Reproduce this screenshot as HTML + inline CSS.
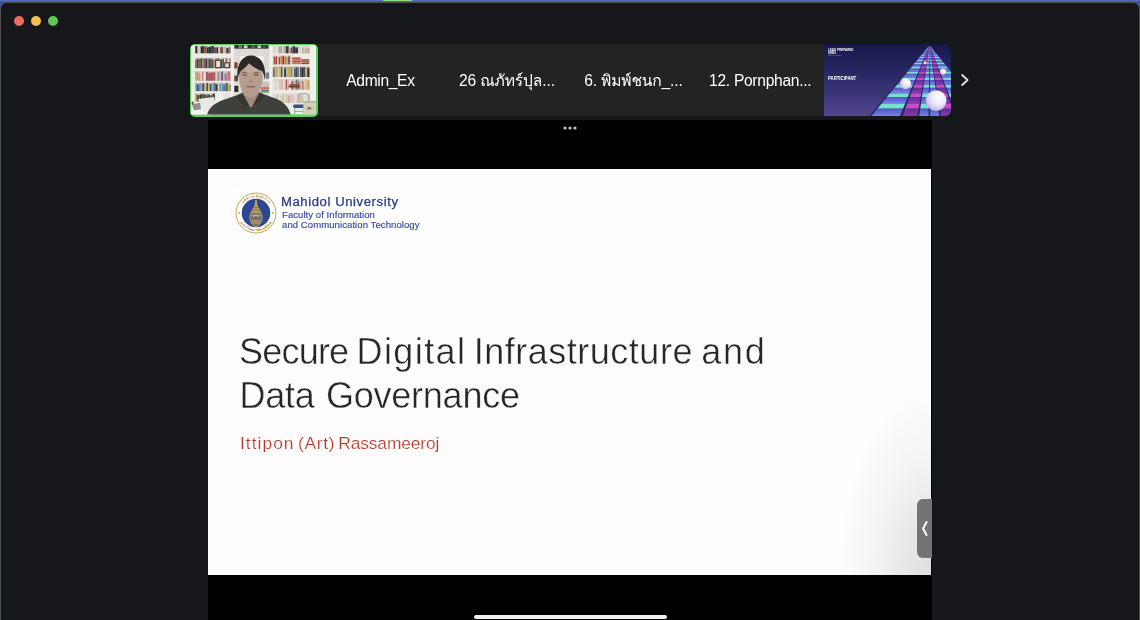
<!DOCTYPE html>
<html lang="en">
<head>
<meta charset="utf-8">
<title>Zoom Meeting</title>
<style>
*{box-sizing:border-box;margin:0;padding:0}
html,body{width:1140px;height:620px;overflow:hidden;background:#3a57b8;font-family:"Liberation Sans",sans-serif}
#desk{position:absolute;left:0;top:0;width:1140px;height:3px;background:linear-gradient(#5c72cc 0,#4a5db4 45%,#2f3f88 100%)}
#mic{position:absolute;left:383px;top:0;width:29px;height:1px;background:#8fe088}
#win{position:absolute;left:0;top:2px;width:1140px;height:620px;background:#16171b;border:1px solid #524f4a;border-radius:7px 7px 0 0;overflow:hidden}
.tl{position:absolute;top:16px;width:10px;height:10px;border-radius:50%}
#strip{position:absolute;left:318px;top:44px;width:506px;height:72px;background:#232323}
.w{position:absolute;white-space:nowrap;line-height:1}
.gl{position:absolute;left:0;top:0;width:100%;height:100%;will-change:transform}
.nm{top:72.6px;color:#fff;font-size:15.6px}
.th{font-family:"Liberation Sans","Loma","Garuda","Noto Sans Thai","Sarabun","IBM Plex Sans Thai",sans-serif}
#stage{position:absolute;left:208px;top:120.3px;width:723.5px;height:500px;background:#000}
#slide{position:absolute;left:208px;top:168.5px;width:723px;height:406px;background:#fefcfd;overflow:hidden}
.t1,.t2{font-size:36px;color:#262527;-webkit-text-stroke:0.45px #fefcfd}
.t1{top:165px}.t2{top:209px}
.sb{top:266px;font-size:17.4px;color:#b23a27;-webkit-text-stroke:0.2px #fefcfd}

#vid{position:absolute;left:189.5px;top:43.5px;width:128.5px;height:73px;border-radius:5px;background:#5ecf5e;overflow:hidden}
#vid svg{position:absolute;left:1.8px;top:1.8px;width:124.9px;height:69.4px;border-radius:2.5px;filter:saturate(.72) blur(.35px)}
#pt{position:absolute;left:824px;top:44px;width:126.5px;height:72px;border-radius:0 6px 6px 0;overflow:hidden;background:linear-gradient(#17184a 0,#2a2a66 45%,#51458f 100%)}
#pt svg{position:absolute;left:0;top:0;width:126.5px;height:72px}
#pt .gl{will-change:transform}
#nx{position:absolute;left:958px;top:72px;width:14px;height:16px}
#dots{position:absolute;left:563px;top:126px;width:14px;height:4px}
#home{position:absolute;left:473.5px;top:615px;width:193.5px;height:4.2px;border-radius:2.1px;background:#f2f2f2}
#tab{position:absolute;left:916.7px;top:499px;width:15px;height:59px;border-radius:6px 0 0 6px;background:#747376}
#shade{position:absolute;left:0;top:0;width:100%;height:100%;background:radial-gradient(ellipse 92px 185px at 100% 100%,rgba(110,110,114,.21) 0,rgba(110,110,114,.15) 30%,rgba(110,110,114,.06) 65%,rgba(110,110,114,0) 100%)}
#band{position:absolute;left:26px;top:18px;width:686px;height:108px;background:#fffeff}
#logo{position:absolute;left:27.3px;top:23.800px;width:42px;height:42px}
.lg{color:#2c3f92;transform-origin:0 0}
.l1{font-size:12px;top:27px;transform:scaleX(1.09);color:#263a88;-webkit-text-stroke:0.25px #263a88}
.l2,.l3{font-size:9.2px;transform:scaleX(1.04);-webkit-text-stroke:0.15px #3448a0;color:#3448a0}
.l2{top:42.2px}.l3{top:52.3px}
</style>
</head>
<body>
<div id="desk"></div><div id="mic"></div>
<div id="win"></div>
<div class="tl" style="left:13.5px;background:#ec6a5e"></div>
<div class="tl" style="left:30.8px;background:#f4bf4f"></div>
<div class="tl" style="left:48.2px;background:#61c554"></div>
<div id="strip"></div>
<div id="vid"><!--VID--><svg viewBox="0 0 124 68" preserveAspectRatio="none"><rect x="0.0" y="0.0" width="124.0" height="68.0" fill="#ecebe6"/><rect x="42.4" y="3.8" width="35.6" height="50.0" fill="#dedbd2"/><rect x="49.0" y="11.0" width="23.0" height="9.0" fill="#f4f4ee"/><rect x="43.0" y="0.0" width="34.0" height="3.6" fill="#3a3230"/><rect x="47.0" y="0.3" width="3.6" height="2.8" fill="#8a7a6a"/><rect x="52.5" y="0.3" width="3.6" height="2.8" fill="#d8d2c4"/><rect x="60.0" y="0.3" width="3.6" height="2.8" fill="#6a5a58"/><rect x="66.0" y="0.3" width="3.6" height="2.8" fill="#cfc8b8"/><rect x="71.0" y="0.3" width="3.6" height="2.8" fill="#4a4a5a"/><rect x="4.0" y="0.2" width="35.5" height="7.9" fill="#d6d2c8"/><rect x="4.3" y="1.0" width="2.2" height="7.1" fill="#2a2a32"/><rect x="6.5" y="0.8" width="3.1" height="7.3" fill="#d8d0c0"/><rect x="9.6" y="1.2" width="3.2" height="6.9" fill="#3a3028"/><rect x="13.1" y="1.3" width="2.4" height="6.8" fill="#8a4a3a"/><rect x="15.8" y="2.3" width="1.7" height="5.8" fill="#22303a"/><rect x="17.5" y="1.8" width="2.6" height="6.3" fill="#22303a"/><rect x="20.1" y="0.9" width="2.6" height="7.2" fill="#30404a"/><rect x="22.7" y="2.3" width="2.6" height="5.8" fill="#8a4a3a"/><rect x="25.3" y="2.3" width="1.8" height="5.8" fill="#22303a"/><rect x="27.2" y="2.8" width="1.8" height="5.3" fill="#d8d0c0"/><rect x="29.0" y="2.1" width="2.7" height="6.0" fill="#8a4a3a"/><rect x="32.0" y="2.0" width="3.0" height="6.1" fill="#c0b8a8"/><rect x="35.1" y="3.0" width="2.1" height="5.1" fill="#22303a"/><rect x="37.3" y="2.2" width="2.0" height="5.9" fill="#8a6a3a"/><rect x="4.0" y="12.5" width="35.5" height="10.2" fill="#cfcabf"/><rect x="4.3" y="14.5" width="1.2" height="8.2" fill="#8a3a34"/><rect x="5.8" y="13.4" width="1.1" height="9.3" fill="#4a3a30"/><rect x="7.2" y="13.9" width="0.9" height="8.8" fill="#5a4a3a"/><rect x="8.3" y="13.4" width="1.3" height="9.3" fill="#4a3a30"/><rect x="9.9" y="13.0" width="1.0" height="9.7" fill="#3a4a6a"/><rect x="11.1" y="12.9" width="1.7" height="9.8" fill="#7a8a5a"/><rect x="13.1" y="13.5" width="1.2" height="9.2" fill="#a03030"/><rect x="14.3" y="13.4" width="1.9" height="9.3" fill="#30404a"/><rect x="16.3" y="13.2" width="1.4" height="9.5" fill="#7a8a5a"/><rect x="17.7" y="13.5" width="1.7" height="9.2" fill="#4a3a30"/><rect x="19.4" y="13.5" width="1.1" height="9.2" fill="#3a4a6a"/><rect x="20.5" y="14.3" width="1.8" height="8.4" fill="#3a4a6a"/><rect x="22.6" y="14.0" width="2.0" height="8.7" fill="#e08a4a"/><rect x="24.6" y="13.1" width="1.1" height="9.6" fill="#5a6a8a"/><rect x="25.6" y="14.2" width="0.9" height="8.5" fill="#c04a6a"/><rect x="26.7" y="13.0" width="1.2" height="9.7" fill="#5a4a3a"/><rect x="28.1" y="13.3" width="1.6" height="9.4" fill="#e0c060"/><rect x="29.6" y="14.3" width="1.4" height="8.4" fill="#5a4a3a"/><rect x="31.3" y="13.5" width="1.3" height="9.2" fill="#4a3a30"/><rect x="33.0" y="12.9" width="1.0" height="9.8" fill="#e8e0d0"/><rect x="34.2" y="13.4" width="1.1" height="9.3" fill="#c9673c"/><rect x="35.3" y="13.1" width="0.9" height="9.6" fill="#8a3a34"/><rect x="36.4" y="12.9" width="1.6" height="9.8" fill="#e8e0d0"/><rect x="38.3" y="13.2" width="1.0" height="9.5" fill="#a03030"/><rect x="24.0" y="14.5" width="6.0" height="8.2" fill="#3a3630"/><rect x="25.0" y="15.5" width="4.0" height="6.2" fill="#e8e4da"/><rect x="33.0" y="17.0" width="5.5" height="5.7" fill="#2e2c2a"/><rect x="33.9" y="17.9" width="3.7" height="3.9" fill="#d8d4ca"/><rect x="4.0" y="25.6" width="35.5" height="9.4" fill="#cfcabf"/><rect x="4.3" y="26.1" width="1.5" height="8.9" fill="#e0a040"/><rect x="6.1" y="26.5" width="1.5" height="8.5" fill="#e87aa0"/><rect x="7.6" y="27.3" width="1.9" height="7.7" fill="#e0a040"/><rect x="9.5" y="26.3" width="1.6" height="8.7" fill="#d8d8d0"/><rect x="11.2" y="26.9" width="1.1" height="8.1" fill="#c85a3c"/><rect x="12.5" y="27.5" width="2.2" height="7.5" fill="#e8e4d8"/><rect x="14.8" y="26.6" width="2.1" height="8.4" fill="#c84a5a"/><rect x="17.0" y="27.1" width="1.7" height="7.9" fill="#c84a5a"/><rect x="18.8" y="27.3" width="2.0" height="7.7" fill="#c84a5a"/><rect x="20.7" y="26.6" width="1.6" height="8.4" fill="#c85a3c"/><rect x="22.3" y="26.8" width="1.9" height="8.2" fill="#c84a5a"/><rect x="24.4" y="27.7" width="1.5" height="7.3" fill="#b8d8d8"/><rect x="26.0" y="26.1" width="1.0" height="8.9" fill="#e0a040"/><rect x="27.0" y="26.8" width="1.3" height="8.2" fill="#e06a6a"/><rect x="28.3" y="27.1" width="1.5" height="7.9" fill="#a8c8d0"/><rect x="29.9" y="26.1" width="2.0" height="8.9" fill="#7a5a9a"/><rect x="31.9" y="26.2" width="1.5" height="8.8" fill="#a8c8d0"/><rect x="33.5" y="27.7" width="1.0" height="7.3" fill="#7a5a9a"/><rect x="34.8" y="27.7" width="1.4" height="7.3" fill="#e87aa0"/><rect x="36.3" y="26.0" width="2.2" height="9.0" fill="#e06a6a"/><rect x="38.8" y="26.2" width="0.5" height="8.8" fill="#e06a6a"/><rect x="4.0" y="36.8" width="35.5" height="8.4" fill="#cfcabf"/><rect x="4.3" y="37.7" width="1.8" height="7.5" fill="#58a0c8"/><rect x="6.1" y="38.5" width="0.9" height="6.7" fill="#2a3a5a"/><rect x="7.0" y="38.6" width="1.5" height="6.6" fill="#4a7aa8"/><rect x="8.4" y="37.6" width="1.2" height="7.6" fill="#4a7aa8"/><rect x="9.8" y="37.8" width="1.2" height="7.4" fill="#d8b838"/><rect x="11.1" y="37.7" width="2.1" height="7.5" fill="#384a6a"/><rect x="13.4" y="38.6" width="2.0" height="6.6" fill="#d8b838"/><rect x="15.4" y="37.1" width="1.6" height="8.1" fill="#384a6a"/><rect x="17.0" y="38.4" width="1.7" height="6.8" fill="#d8b838"/><rect x="18.7" y="38.2" width="1.1" height="7.0" fill="#2a3a5a"/><rect x="19.8" y="38.0" width="1.3" height="7.2" fill="#58a0c8"/><rect x="21.4" y="37.3" width="1.9" height="7.9" fill="#58a0c8"/><rect x="23.3" y="37.6" width="1.2" height="7.6" fill="#2a3a5a"/><rect x="24.8" y="38.4" width="1.6" height="6.8" fill="#2a3a5a"/><rect x="26.8" y="38.8" width="1.3" height="6.4" fill="#e8d8a0"/><rect x="28.1" y="37.9" width="1.8" height="7.3" fill="#58a0c8"/><rect x="30.2" y="37.5" width="1.6" height="7.7" fill="#58a0c8"/><rect x="31.9" y="38.6" width="2.1" height="6.6" fill="#4a7aa8"/><rect x="34.3" y="37.3" width="1.1" height="7.9" fill="#384a6a"/><rect x="35.5" y="37.5" width="1.0" height="7.7" fill="#2a3a5a"/><rect x="36.5" y="38.4" width="1.8" height="6.8" fill="#d8b838"/><rect x="38.4" y="38.6" width="0.9" height="6.6" fill="#384a6a"/><rect x="4.0" y="47.3" width="20.0" height="8.0" fill="#cfcabf"/><rect x="4.3" y="47.8" width="1.9" height="7.5" fill="#b89a30"/><rect x="6.2" y="49.0" width="2.2" height="6.3" fill="#4a3a30"/><rect x="8.7" y="48.3" width="2.2" height="7.0" fill="#30404a"/><rect x="10.9" y="47.8" width="1.4" height="7.5" fill="#8a6a3a"/><rect x="12.3" y="48.4" width="1.4" height="6.9" fill="#2a2a32"/><rect x="14.0" y="48.7" width="1.4" height="6.6" fill="#6a5a2a"/><rect x="15.4" y="49.2" width="1.1" height="6.1" fill="#22303a"/><rect x="16.5" y="48.1" width="1.1" height="7.2" fill="#4a3a30"/><rect x="17.8" y="49.0" width="1.9" height="6.3" fill="#5a4a3a"/><rect x="20.0" y="49.2" width="1.2" height="6.1" fill="#3a4a6a"/><rect x="21.5" y="47.8" width="1.8" height="7.5" fill="#2a2a32"/><rect x="23.3" y="47.7" width="0.5" height="7.6" fill="#2a2a32"/><rect x="24.5" y="47.8" width="7.0" height="7.5" fill="#f2f0ea"/><rect x="32.0" y="47.8" width="7.0" height="7.5" fill="#e6e3dc"/><rect x="81.0" y="0.2" width="37.0" height="7.9" fill="#dcd8ce"/><rect x="81.3" y="0.7" width="3.2" height="7.4" fill="#e0d8c8"/><rect x="84.5" y="0.8" width="2.1" height="7.3" fill="#e8e4da"/><rect x="86.8" y="1.6" width="3.6" height="6.5" fill="#b8a890"/><rect x="90.4" y="2.4" width="1.7" height="5.7" fill="#d8d0c0"/><rect x="92.1" y="1.0" width="2.1" height="7.1" fill="#b8a890"/><rect x="94.3" y="1.1" width="2.7" height="7.0" fill="#3a3a4a"/><rect x="97.0" y="2.7" width="2.1" height="5.4" fill="#b8a890"/><rect x="99.1" y="2.5" width="1.6" height="5.6" fill="#8a3a3a"/><rect x="100.8" y="1.2" width="2.6" height="6.9" fill="#3a3a4a"/><rect x="103.4" y="2.3" width="2.9" height="5.8" fill="#3a3a4a"/><rect x="106.6" y="1.3" width="3.5" height="6.8" fill="#e0d8c8"/><rect x="110.2" y="2.7" width="2.3" height="5.4" fill="#c8b8a0"/><rect x="112.7" y="3.2" width="3.6" height="4.9" fill="#c8b8a0"/><rect x="116.3" y="2.5" width="1.5" height="5.6" fill="#b8a890"/><rect x="81.0" y="10.3" width="19.0" height="8.7" fill="#cfcabf"/><rect x="81.3" y="10.7" width="1.1" height="8.3" fill="#e8a050"/><rect x="82.5" y="11.6" width="1.6" height="7.4" fill="#c8402c"/><rect x="84.4" y="11.0" width="1.1" height="8.0" fill="#c8402c"/><rect x="85.6" y="11.1" width="1.3" height="7.9" fill="#d8c8b0"/><rect x="87.1" y="12.0" width="1.2" height="7.0" fill="#a83030"/><rect x="88.3" y="10.6" width="1.3" height="8.4" fill="#e8a050"/><rect x="89.6" y="11.4" width="1.4" height="7.6" fill="#e06a3c"/><rect x="91.0" y="10.6" width="1.5" height="8.4" fill="#a83030"/><rect x="92.4" y="11.5" width="1.1" height="7.5" fill="#e8a050"/><rect x="93.5" y="11.5" width="1.2" height="7.5" fill="#d85a34"/><rect x="94.7" y="11.7" width="1.6" height="7.3" fill="#e8a050"/><rect x="96.5" y="11.3" width="1.7" height="7.7" fill="#a83030"/><rect x="98.2" y="11.9" width="0.9" height="7.1" fill="#d8c8b0"/><rect x="100.5" y="12.2" width="8.5" height="1.5" fill="#d8482c"/><rect x="100.5" y="13.9" width="8.5" height="1.5" fill="#e05a34"/><rect x="100.5" y="15.6" width="8.5" height="1.5" fill="#c83c30"/><rect x="100.5" y="17.3" width="8.5" height="1.5" fill="#e8643c"/><rect x="109.5" y="13.9" width="8.0" height="1.5" fill="#c83a3a"/><rect x="109.5" y="15.6" width="8.0" height="1.5" fill="#d84a40"/><rect x="109.5" y="17.3" width="8.0" height="1.5" fill="#b83434"/><rect x="81.0" y="21.2" width="37.0" height="10.2" fill="#a8a498"/><rect x="81.3" y="22.9" width="1.7" height="8.5" fill="#4a6a8a"/><rect x="83.0" y="22.5" width="1.8" height="8.9" fill="#c8b040"/><rect x="84.8" y="21.6" width="1.0" height="9.8" fill="#c8b040"/><rect x="86.0" y="22.1" width="2.0" height="9.3" fill="#d0c8b8"/><rect x="87.9" y="22.6" width="1.6" height="8.8" fill="#c8b040"/><rect x="89.5" y="21.5" width="1.4" height="9.9" fill="#3a5a4a"/><rect x="90.9" y="21.6" width="1.6" height="9.8" fill="#d0c8b8"/><rect x="92.7" y="22.9" width="1.8" height="8.5" fill="#22303a"/><rect x="94.5" y="22.6" width="1.2" height="8.8" fill="#d0c8b8"/><rect x="96.0" y="21.6" width="1.8" height="9.8" fill="#c8b040"/><rect x="97.9" y="22.5" width="1.7" height="8.9" fill="#c8b040"/><rect x="99.7" y="21.8" width="1.0" height="9.6" fill="#6a8a6a"/><rect x="100.8" y="21.7" width="1.6" height="9.7" fill="#d0c8b8"/><rect x="102.4" y="23.2" width="1.4" height="8.2" fill="#3a5a4a"/><rect x="103.8" y="22.0" width="1.6" height="9.4" fill="#4a4a6a"/><rect x="105.6" y="22.3" width="1.4" height="9.1" fill="#3a5a4a"/><rect x="107.0" y="21.6" width="1.2" height="9.8" fill="#d0c8b8"/><rect x="108.3" y="21.6" width="1.2" height="9.8" fill="#4a4a6a"/><rect x="109.8" y="22.2" width="2.0" height="9.2" fill="#22303a"/><rect x="111.8" y="21.7" width="1.5" height="9.7" fill="#4a4a6a"/><rect x="113.5" y="21.7" width="1.9" height="9.7" fill="#c8b040"/><rect x="115.6" y="22.7" width="1.9" height="8.7" fill="#22303a"/><rect x="81.0" y="33.6" width="37.0" height="10.1" fill="#cfcabf"/><rect x="81.3" y="34.9" width="2.1" height="8.8" fill="#e8e2d2"/><rect x="83.4" y="34.9" width="0.9" height="8.8" fill="#e0d090"/><rect x="84.6" y="34.2" width="1.3" height="9.5" fill="#f0e8d8"/><rect x="86.2" y="35.7" width="1.3" height="8.0" fill="#e8e2d2"/><rect x="87.6" y="35.7" width="1.9" height="8.0" fill="#d8c8a8"/><rect x="89.5" y="35.8" width="1.8" height="7.9" fill="#e0b8b0"/><rect x="91.5" y="34.7" width="1.4" height="9.0" fill="#e8e8e0"/><rect x="92.9" y="34.8" width="1.4" height="8.9" fill="#e0b8b0"/><rect x="94.2" y="34.0" width="1.3" height="9.7" fill="#c84a5a"/><rect x="95.6" y="34.2" width="1.7" height="9.5" fill="#e0b8b0"/><rect x="97.7" y="34.3" width="1.6" height="9.4" fill="#f0e8d8"/><rect x="99.5" y="35.6" width="2.0" height="8.1" fill="#c84a5a"/><rect x="101.9" y="35.9" width="2.1" height="7.8" fill="#d0a8a0"/><rect x="104.0" y="34.0" width="1.8" height="9.7" fill="#3a8a7a"/><rect x="106.1" y="35.5" width="1.5" height="8.2" fill="#c84a5a"/><rect x="107.7" y="35.8" width="1.5" height="7.9" fill="#d0a8a0"/><rect x="109.3" y="34.8" width="1.1" height="8.9" fill="#e0b8b0"/><rect x="110.5" y="35.5" width="1.2" height="8.2" fill="#c84a5a"/><rect x="111.9" y="34.4" width="1.4" height="9.3" fill="#e0d090"/><rect x="113.7" y="35.3" width="1.1" height="8.4" fill="#d8c8a8"/><rect x="114.7" y="35.6" width="1.6" height="8.1" fill="#d0a8a0"/><rect x="116.3" y="34.6" width="1.5" height="9.1" fill="#d8a030"/><rect x="97.0" y="39.5" width="11.0" height="2.2" fill="#6a4a2a"/><rect x="98.0" y="38.3" width="9.0" height="1.4" fill="#c0462e"/><rect x="81.0" y="47.3" width="37.0" height="9.5" fill="#e0dcd0"/><rect x="81.3" y="48.6" width="1.4" height="8.2" fill="#c8d8d8"/><rect x="82.7" y="48.7" width="1.1" height="8.1" fill="#f0e8d8"/><rect x="83.8" y="49.1" width="1.3" height="7.7" fill="#c8d8d8"/><rect x="85.1" y="48.4" width="1.7" height="8.4" fill="#b8c8b0"/><rect x="86.8" y="48.2" width="1.3" height="8.6" fill="#e8e2d2"/><rect x="88.4" y="49.4" width="1.2" height="7.4" fill="#e8d0c0"/><rect x="89.6" y="49.3" width="1.0" height="7.5" fill="#b8c8b0"/><rect x="90.9" y="48.4" width="1.6" height="8.4" fill="#e0b8b0"/><rect x="92.5" y="48.4" width="1.0" height="8.4" fill="#f0d8a0"/><rect x="93.9" y="48.5" width="2.0" height="8.3" fill="#d8c8a8"/><rect x="96.1" y="49.4" width="1.9" height="7.4" fill="#d0a8a0"/><rect x="98.4" y="48.1" width="2.0" height="8.7" fill="#d8c8a8"/><rect x="100.3" y="48.6" width="1.1" height="8.2" fill="#e8c8d0"/><rect x="101.4" y="49.0" width="1.9" height="7.8" fill="#e8c8d0"/><rect x="103.6" y="49.1" width="1.0" height="7.7" fill="#e8e2d2"/><rect x="104.6" y="49.3" width="1.2" height="7.5" fill="#e8c8d0"/><rect x="105.9" y="48.8" width="2.0" height="8.0" fill="#d0a8a0"/><rect x="108.2" y="47.8" width="1.7" height="9.0" fill="#d8c8a8"/><rect x="110.0" y="48.7" width="1.5" height="8.1" fill="#b8c8b0"/><rect x="111.6" y="48.7" width="1.1" height="8.1" fill="#e8e2d2"/><rect x="112.9" y="48.1" width="2.0" height="8.7" fill="#f0e8d8"/><rect x="114.9" y="48.0" width="1.4" height="8.8" fill="#c8d8d8"/><rect x="116.3" y="48.9" width="1.5" height="7.9" fill="#e0b8b0"/><rect x="43.0" y="17.0" width="3.2" height="6.0" fill="#7a4a2a"/><rect x="43.2" y="26.0" width="3.4" height="1.2" fill="#e8e6e0"/><rect x="43.0" y="30.0" width="3.6" height="5.5" fill="#5a4a3a"/><rect x="43.4" y="38.0" width="3.2" height="1.0" fill="#e8e6e0"/><rect x="43.0" y="40.0" width="4.0" height="6.0" fill="#2a2a2a"/><rect x="73.0" y="24.0" width="4.6" height="1.1" fill="#ecebe6"/><rect x="74.0" y="27.0" width="3.6" height="6.0" fill="#6a7a9a"/><rect x="72.0" y="34.0" width="5.6" height="1.1" fill="#ecebe6"/><rect x="71.0" y="36.5" width="6.5" height="5.0" fill="#c8c0b0"/><rect x="69.5" y="41.5" width="8.0" height="1.4" fill="#d8402c"/><rect x="69.5" y="42.9" width="8.0" height="1.3" fill="#e8a030"/><rect x="69.5" y="44.2" width="8.0" height="1.3" fill="#3a7a9a"/><rect x="69.5" y="45.5" width="8.0" height="1.3" fill="#4a9a5a"/><rect x="69.5" y="46.8" width="8.0" height="1.2" fill="#e8e0d0"/><rect x="39.5" y="0.0" width="2.9" height="58.0" fill="#f1f0ec"/><rect x="78.0" y="0.0" width="3.0" height="58.0" fill="#f1f0ec"/><path d="M0 60 Q6 57 12 60 L22 68 L0 68Z" fill="#f4f4f2"/><path d="M7 53 L23 51 L25 63 L12 66Z" fill="#e9e8e6"/><path d="M1 58 L9 56.5 L10 63 L3 64Z" fill="#8a8e94"/><rect x="0.0" y="43.0" width="3.2" height="15.0" fill="#f1f0ec"/><rect x="0.6" y="55.5" width="2.0" height="3.0" fill="#a03a2a"/><rect x="101.5" y="58.2" width="11.5" height="3.6" fill="#2f4f8a" rx="1"/><path d="M103 61.5v6.5M111.5 61.5v6.5M103 65h8.5M106 49c4-2 8-2 11 0l1 9" fill="none" stroke="#7aa884" stroke-width="0.9"/><rect x="111.5" y="55.0" width="12.5" height="13.0" fill="#d8cfb4"/><rect x="111.5" y="55.0" width="12.5" height="1.6" fill="#b8ae90"/><rect x="114.5" y="60.0" width="6.0" height="4.0" fill="#c4ba9c"/><rect x="116.2" y="61.4" width="2.6" height="1.2" fill="#3a3a3a"/><rect x="118.0" y="0.0" width="6.0" height="55.0" fill="#f0efeb"/><path d="M16 68 C18 61 24 56.5 32 53.8 L47.5 48.5 L59.5 51 L71 47.8 L84 52.5 C92 55.5 97 61 99 68Z" fill="#3d4039"/><path d="M47.5 48.5 L51.5 46.5 L58 58 L53 60 L46 52Z" fill="#33362f"/><path d="M71 47.8 L67.5 46 L60.5 58.5 L65 58 L72.5 51.5Z" fill="#33362f"/><path d="M51.5 42 L67.5 42 L67.8 47 L60.2 61 L58.8 61 L51.2 47Z" fill="#ad8672"/><path d="M47.7 30 C47.5 40 51 48 55.5 50.6 Q59.5 52.2 63.5 50.6 C68 48 71.5 40 71.2 30 C71 22 67 15.5 59.5 15.5 C52 15.5 48 22 47.7 30Z" fill="#be9a84"/><ellipse cx="59.3" cy="23" rx="8.5" ry="4.5" fill="#c9a791"/><path d="M46.300 34 C44.600 21 49.500 10.400 59.600 10.400 C70.400 10.400 75 20.500 73.200 34.500 C72.800 30.500 72 27.500 70.400 25.300 C67 24.300 61.500 21.500 57.600 17.800 C55 21 52 23.800 49.600 25.300 C47.900 27.800 46.800 30.500 46.300 34Z" fill="#2d2825"/><path d="M50.6 27.4q2.6-1 5.2 0M62 27.4q2.8-1 5.6 0" stroke="#5a463c" stroke-width="0.9" fill="none" opacity=".8"/><path d="M51.3 29.3h3.8M62.4 29.3h4.2" stroke="#3a2e2a" stroke-width="1" fill="none" opacity=".85"/><path d="M57.4 35.4q1.9 1.2 3.8 0" stroke="#9a735f" stroke-width="1" fill="none"/><path d="M55 40.6q4.300 1.0 8.600 0" stroke="#96605a" stroke-width="1.2" fill="none"/></svg><!--/VID--></div>
<div id="pt"><!--PT--><svg viewBox="0 0 126.5 72" preserveAspectRatio="none"><defs><linearGradient id="gt" x1="0" y1="0" x2="0" y2="1"><stop offset="0" stop-color="#4c55c4"/><stop offset="1" stop-color="#7f86e6"/></linearGradient><linearGradient id="gm" x1="0" y1="0" x2="0" y2="1"><stop offset="0" stop-color="#5c2f98"/><stop offset="1" stop-color="#8a3cae"/></linearGradient><radialGradient id="sp" cx="0.62" cy="0.34" r="0.8"><stop offset="0" stop-color="#ffffff"/><stop offset="0.45" stop-color="#ece8fa"/><stop offset="0.8" stop-color="#c3b9ea"/><stop offset="1" stop-color="#9a8fd6"/></radialGradient></defs><path d="M105.5 1.1 L41.8 76.1 L166.0 76.1Z" fill="#2a2466"/><path d="M42.11 78.40 L73.25 78.40 L69.02 88.55 L33.79 88.55Z" fill="url(#gt)"/><path d="M46.70 72.81 L75.59 72.81 L73.25 78.40 L42.11 78.40Z" fill="#74e0d0"/><path d="M53.52 64.49 L79.06 64.49 L75.59 72.81 L46.70 72.81Z" fill="url(#gt)"/><path d="M57.28 59.90 L80.97 59.90 L79.06 64.49 L53.52 64.49Z" fill="#74e0d0"/><path d="M62.88 53.08 L83.82 53.08 L80.97 59.90 L57.28 59.90Z" fill="url(#gt)"/><path d="M65.96 49.32 L85.39 49.32 L83.82 53.08 L62.88 53.08Z" fill="#74e0d0"/><path d="M70.55 43.72 L87.72 43.72 L85.39 49.32 L65.96 49.32Z" fill="url(#gt)"/><path d="M73.08 40.64 L89.01 40.64 L87.72 43.72 L70.55 43.72Z" fill="#74e0d0"/><path d="M76.84 36.05 L90.92 36.05 L89.01 40.64 L73.08 40.64Z" fill="url(#gt)"/><path d="M78.92 33.52 L91.98 33.52 L90.92 36.05 L76.84 36.05Z" fill="#74e0d0"/><path d="M82.00 29.76 L93.55 29.76 L91.98 33.52 L78.92 33.52Z" fill="url(#gt)"/><path d="M83.70 27.68 L94.41 27.68 L93.55 29.76 L82.00 29.76Z" fill="#74e0d0"/><path d="M86.23 24.60 L95.70 24.60 L94.41 27.68 L83.70 27.68Z" fill="url(#gt)"/><path d="M87.62 22.90 L96.41 22.90 L95.70 24.60 L86.23 24.60Z" fill="#74e0d0"/><path d="M89.70 20.37 L97.46 20.37 L96.41 22.90 L87.62 22.90Z" fill="url(#gt)"/><path d="M90.84 18.98 L98.04 18.98 L97.46 20.37 L89.70 20.37Z" fill="#74e0d0"/><path d="M92.54 16.90 L98.91 16.90 L98.04 18.98 L90.84 18.98Z" fill="url(#gt)"/><path d="M93.48 15.76 L99.39 15.76 L98.91 16.90 L92.54 16.90Z" fill="#74e0d0"/><path d="M94.88 14.06 L100.10 14.06 L99.39 15.76 L93.48 15.76Z" fill="url(#gt)"/><path d="M95.64 13.12 L100.49 13.12 L100.10 14.06 L94.88 14.06Z" fill="#74e0d0"/><path d="M96.79 11.72 L101.07 11.72 L100.49 13.12 L95.64 13.12Z" fill="url(#gt)"/><path d="M97.42 10.96 L101.39 10.96 L101.07 11.72 L96.79 11.72Z" fill="#74e0d0"/><path d="M98.36 9.81 L101.87 9.81 L101.39 10.96 L97.42 10.96Z" fill="url(#gt)"/><path d="M98.87 9.18 L102.13 9.18 L101.87 9.81 L98.36 9.81Z" fill="#74e0d0"/><path d="M99.64 8.24 L102.52 8.24 L102.13 9.18 L98.87 9.18Z" fill="url(#gt)"/><path d="M100.07 7.73 L102.74 7.73 L102.52 8.24 L99.64 8.24Z" fill="#74e0d0"/><path d="M100.70 6.96 L103.06 6.96 L102.74 7.73 L100.07 7.73Z" fill="url(#gt)"/><path d="M101.04 6.53 L103.23 6.53 L103.06 6.96 L100.70 6.96Z" fill="#74e0d0"/><path d="M101.56 5.90 L103.50 5.90 L103.23 6.53 L101.04 6.53Z" fill="url(#gt)"/><path d="M101.85 5.56 L103.64 5.56 L103.50 5.90 L101.56 5.90Z" fill="#74e0d0"/><path d="M102.27 5.04 L103.86 5.04 L103.64 5.56 L101.85 5.56Z" fill="url(#gt)"/><path d="M102.50 4.75 L103.98 4.75 L103.86 5.04 L102.27 5.04Z" fill="#74e0d0"/><path d="M102.85 4.33 L104.15 4.33 L103.98 4.75 L102.50 4.75Z" fill="url(#gt)"/><path d="M103.04 4.10 L104.25 4.10 L104.15 4.33 L102.85 4.33Z" fill="#74e0d0"/><path d="M103.33 3.75 L104.40 3.75 L104.25 4.10 L103.04 4.10Z" fill="url(#gt)"/><path d="M103.49 3.56 L104.48 3.56 L104.40 3.75 L103.33 3.75Z" fill="#74e0d0"/><path d="M103.72 3.27 L104.59 3.27 L104.48 3.56 L103.49 3.56Z" fill="url(#gt)"/><path d="M103.85 3.11 L104.66 3.11 L104.59 3.27 L103.72 3.27Z" fill="#74e0d0"/><path d="M104.04 2.88 L104.76 2.88 L104.66 3.11 L103.85 3.11Z" fill="url(#gt)"/><path d="M104.15 2.75 L104.81 2.75 L104.76 2.88 L104.04 2.88Z" fill="#74e0d0"/><path d="M104.30 2.56 L104.89 2.56 L104.81 2.75 L104.15 2.75Z" fill="url(#gt)"/><path d="M104.39 2.45 L104.93 2.45 L104.89 2.56 L104.30 2.56Z" fill="#74e0d0"/><path d="M76.02 78.40 L92.25 78.40 L90.51 88.55 L72.14 88.55Z" fill="url(#gm)"/><path d="M78.15 72.81 L93.21 72.81 L92.25 78.40 L76.02 78.40Z" fill="#c44cc4"/><path d="M81.32 64.49 L94.63 64.49 L93.21 72.81 L78.15 72.81Z" fill="url(#gm)"/><path d="M83.07 59.90 L95.42 59.90 L94.63 64.49 L81.32 64.49Z" fill="#c44cc4"/><path d="M85.67 53.08 L96.59 53.08 L95.42 59.90 L83.07 59.90Z" fill="url(#gm)"/><path d="M87.11 49.32 L97.23 49.32 L96.59 53.08 L85.67 53.08Z" fill="#c44cc4"/><path d="M89.24 43.72 L98.19 43.72 L97.23 49.32 L87.11 49.32Z" fill="url(#gm)"/><path d="M90.42 40.64 L98.72 40.64 L98.19 43.72 L89.24 43.72Z" fill="#c44cc4"/><path d="M92.17 36.05 L99.51 36.05 L98.72 40.64 L90.42 40.64Z" fill="url(#gm)"/><path d="M93.13 33.52 L99.94 33.52 L99.51 36.05 L92.17 36.05Z" fill="#c44cc4"/><path d="M94.57 29.76 L100.59 29.76 L99.94 33.52 L93.13 33.52Z" fill="url(#gm)"/><path d="M95.36 27.68 L100.94 27.68 L100.59 29.76 L94.57 29.76Z" fill="#c44cc4"/><path d="M96.54 24.60 L101.47 24.60 L100.94 27.68 L95.36 27.68Z" fill="url(#gm)"/><path d="M97.19 22.90 L101.76 22.90 L101.47 24.60 L96.54 24.60Z" fill="#c44cc4"/><path d="M98.15 20.37 L102.20 20.37 L101.76 22.90 L97.19 22.90Z" fill="url(#gm)"/><path d="M98.68 18.98 L102.44 18.98 L102.20 20.37 L98.15 20.37Z" fill="#c44cc4"/><path d="M99.47 16.90 L102.79 16.90 L102.44 18.98 L98.68 18.98Z" fill="url(#gm)"/><path d="M99.91 15.76 L102.99 15.76 L102.79 16.90 L99.47 16.90Z" fill="#c44cc4"/><path d="M100.56 14.06 L103.28 14.06 L102.99 15.76 L99.91 15.76Z" fill="url(#gm)"/><path d="M100.92 13.12 L103.44 13.12 L103.28 14.06 L100.56 14.06Z" fill="#c44cc4"/><path d="M101.45 11.72 L103.68 11.72 L103.44 13.12 L100.92 13.12Z" fill="url(#gm)"/><path d="M101.74 10.96 L103.81 10.96 L103.68 11.72 L101.45 11.72Z" fill="#c44cc4"/><path d="M102.18 9.81 L104.01 9.81 L103.81 10.96 L101.74 10.96Z" fill="url(#gm)"/><path d="M102.42 9.18 L104.11 9.18 L104.01 9.81 L102.18 9.81Z" fill="#c44cc4"/><path d="M102.78 8.24 L104.28 8.24 L104.11 9.18 L102.42 9.18Z" fill="url(#gm)"/><path d="M102.97 7.73 L104.36 7.73 L104.28 8.24 L102.78 8.24Z" fill="#c44cc4"/><path d="M103.27 6.96 L104.50 6.96 L104.36 7.73 L102.97 7.73Z" fill="url(#gm)"/><path d="M103.43 6.53 L104.57 6.53 L104.50 6.96 L103.27 6.96Z" fill="#c44cc4"/><path d="M103.67 5.90 L104.68 5.90 L104.57 6.53 L103.43 6.53Z" fill="url(#gm)"/><path d="M103.80 5.56 L104.74 5.56 L104.68 5.90 L103.67 5.90Z" fill="#c44cc4"/><path d="M104.00 5.04 L104.82 5.04 L104.74 5.56 L103.80 5.56Z" fill="url(#gm)"/><path d="M104.11 4.75 L104.87 4.75 L104.82 5.04 L104.00 5.04Z" fill="#c44cc4"/><path d="M104.27 4.33 L104.95 4.33 L104.87 4.75 L104.11 4.75Z" fill="url(#gm)"/><path d="M104.36 4.10 L104.99 4.10 L104.95 4.33 L104.27 4.33Z" fill="#c44cc4"/><path d="M104.49 3.75 L105.05 3.75 L104.99 4.10 L104.36 4.10Z" fill="url(#gm)"/><path d="M104.56 3.56 L105.08 3.56 L105.05 3.75 L104.49 3.75Z" fill="#c44cc4"/><path d="M104.67 3.27 L105.13 3.27 L105.08 3.56 L104.56 3.56Z" fill="url(#gm)"/><path d="M104.73 3.11 L105.15 3.11 L105.13 3.27 L104.67 3.27Z" fill="#c44cc4"/><path d="M104.82 2.88 L105.19 2.88 L105.15 3.11 L104.73 3.11Z" fill="url(#gm)"/><path d="M104.87 2.75 L105.22 2.75 L105.19 2.88 L104.82 2.88Z" fill="#c44cc4"/><path d="M104.94 2.56 L105.25 2.56 L105.22 2.75 L104.87 2.75Z" fill="url(#gm)"/><path d="M104.98 2.45 L105.27 2.45 L105.25 2.56 L104.94 2.56Z" fill="#c44cc4"/><path d="M94.24 78.40 L104.51 78.40 L104.38 88.55 L92.76 88.55Z" fill="url(#gt)"/><path d="M95.05 72.81 L104.58 72.81 L104.51 78.40 L94.24 78.40Z" fill="#74e0d0"/><path d="M96.26 64.49 L104.69 64.49 L104.58 72.81 L95.05 72.81Z" fill="url(#gt)"/><path d="M96.93 59.90 L104.74 59.90 L104.69 64.49 L96.26 64.49Z" fill="#74e0d0"/><path d="M97.93 53.08 L104.83 53.08 L104.74 59.90 L96.93 59.90Z" fill="url(#gt)"/><path d="M98.47 49.32 L104.88 49.32 L104.83 53.08 L97.93 53.08Z" fill="#74e0d0"/><path d="M99.29 43.72 L104.95 43.72 L104.88 49.32 L98.47 49.32Z" fill="url(#gt)"/><path d="M99.74 40.64 L104.99 40.64 L104.95 43.72 L99.29 43.72Z" fill="#74e0d0"/><path d="M100.41 36.05 L105.05 36.05 L104.99 40.64 L99.74 40.64Z" fill="url(#gt)"/><path d="M100.78 33.52 L105.08 33.52 L105.05 36.05 L100.41 36.05Z" fill="#74e0d0"/><path d="M101.32 29.76 L105.13 29.76 L105.08 33.52 L100.78 33.52Z" fill="url(#gt)"/><path d="M101.63 27.68 L105.16 27.68 L105.13 29.76 L101.32 29.76Z" fill="#74e0d0"/><path d="M102.08 24.60 L105.20 24.60 L105.16 27.68 L101.63 27.68Z" fill="url(#gt)"/><path d="M102.32 22.90 L105.22 22.90 L105.20 24.60 L102.08 24.60Z" fill="#74e0d0"/><path d="M102.69 20.37 L105.25 20.37 L105.22 22.90 L102.32 22.90Z" fill="url(#gt)"/><path d="M102.90 18.98 L105.27 18.98 L105.25 20.37 L102.69 20.37Z" fill="#74e0d0"/><path d="M103.20 16.90 L105.30 16.90 L105.27 18.98 L102.90 18.98Z" fill="url(#gt)"/><path d="M103.36 15.76 L105.31 15.76 L105.30 16.90 L103.20 16.90Z" fill="#74e0d0"/><path d="M103.61 14.06 L105.33 14.06 L105.31 15.76 L103.36 15.76Z" fill="url(#gt)"/><path d="M103.75 13.12 L105.35 13.12 L105.33 14.06 L103.61 14.06Z" fill="#74e0d0"/><path d="M103.95 11.72 L105.36 11.72 L105.35 13.12 L103.75 13.12Z" fill="url(#gt)"/><path d="M104.06 10.96 L105.37 10.96 L105.36 11.72 L103.95 11.72Z" fill="#74e0d0"/><path d="M104.23 9.81 L105.39 9.81 L105.37 10.96 L104.06 10.96Z" fill="url(#gt)"/><path d="M104.32 9.18 L105.40 9.18 L105.39 9.81 L104.23 9.81Z" fill="#74e0d0"/><path d="M104.46 8.24 L105.41 8.24 L105.40 9.18 L104.32 9.18Z" fill="url(#gt)"/><path d="M104.53 7.73 L105.41 7.73 L105.41 8.24 L104.46 8.24Z" fill="#74e0d0"/><path d="M104.65 6.96 L105.42 6.96 L105.41 7.73 L104.53 7.73Z" fill="url(#gt)"/><path d="M104.71 6.53 L105.43 6.53 L105.42 6.96 L104.65 6.96Z" fill="#74e0d0"/><path d="M104.80 5.90 L105.44 5.90 L105.43 6.53 L104.71 6.53Z" fill="url(#gt)"/><path d="M104.85 5.56 L105.44 5.56 L105.44 5.90 L104.80 5.90Z" fill="#74e0d0"/><path d="M104.93 5.04 L105.45 5.04 L105.44 5.56 L104.85 5.56Z" fill="url(#gt)"/><path d="M104.97 4.75 L105.45 4.75 L105.45 5.04 L104.93 5.04Z" fill="#74e0d0"/><path d="M105.03 4.33 L105.46 4.33 L105.45 4.75 L104.97 4.75Z" fill="url(#gt)"/><path d="M105.06 4.10 L105.46 4.10 L105.46 4.33 L105.03 4.33Z" fill="#74e0d0"/><path d="M105.11 3.75 L105.47 3.75 L105.46 4.10 L105.06 4.10Z" fill="url(#gt)"/><path d="M105.14 3.56 L105.47 3.56 L105.47 3.75 L105.11 3.75Z" fill="#74e0d0"/><path d="M105.18 3.27 L105.47 3.27 L105.47 3.56 L105.14 3.56Z" fill="url(#gt)"/><path d="M105.21 3.11 L105.47 3.11 L105.47 3.27 L105.18 3.27Z" fill="#74e0d0"/><path d="M105.24 2.88 L105.48 2.88 L105.47 3.11 L105.21 3.11Z" fill="url(#gt)"/><path d="M105.26 2.75 L105.48 2.75 L105.48 2.88 L105.24 2.88Z" fill="#74e0d0"/><path d="M105.29 2.56 L105.48 2.56 L105.48 2.75 L105.26 2.75Z" fill="url(#gt)"/><path d="M105.30 2.45 L105.48 2.45 L105.48 2.56 L105.29 2.56Z" fill="#74e0d0"/><path d="M106.27 78.40 L116.43 78.40 L117.87 88.55 L106.37 88.55Z" fill="url(#gt)"/><path d="M106.22 72.81 L115.64 72.81 L116.43 78.40 L106.27 78.40Z" fill="#74e0d0"/><path d="M106.13 64.49 L114.46 64.49 L115.64 72.81 L106.22 72.81Z" fill="url(#gt)"/><path d="M106.09 59.90 L113.82 59.90 L114.46 64.49 L106.13 64.49Z" fill="#74e0d0"/><path d="M106.02 53.08 L112.85 53.08 L113.82 59.90 L106.09 59.90Z" fill="url(#gt)"/><path d="M105.98 49.32 L112.32 49.32 L112.85 53.08 L106.02 53.08Z" fill="#74e0d0"/><path d="M105.93 43.72 L111.53 43.72 L112.32 49.32 L105.98 49.32Z" fill="url(#gt)"/><path d="M105.90 40.64 L111.09 40.64 L111.53 43.72 L105.93 43.72Z" fill="#74e0d0"/><path d="M105.85 36.05 L110.44 36.05 L111.09 40.64 L105.90 40.64Z" fill="url(#gt)"/><path d="M105.82 33.52 L110.09 33.52 L110.44 36.05 L105.85 36.05Z" fill="#74e0d0"/><path d="M105.79 29.76 L109.55 29.76 L110.09 33.52 L105.82 33.52Z" fill="url(#gt)"/><path d="M105.77 27.68 L109.26 27.68 L109.55 29.76 L105.79 29.76Z" fill="#74e0d0"/><path d="M105.73 24.60 L108.82 24.60 L109.26 27.68 L105.77 27.68Z" fill="url(#gt)"/><path d="M105.72 22.90 L108.58 22.90 L108.82 24.60 L105.73 24.60Z" fill="#74e0d0"/><path d="M105.69 20.37 L108.23 20.37 L108.58 22.90 L105.72 22.90Z" fill="url(#gt)"/><path d="M105.68 18.98 L108.03 18.98 L108.23 20.37 L105.69 20.37Z" fill="#74e0d0"/><path d="M105.66 16.90 L107.73 16.90 L108.03 18.98 L105.68 18.98Z" fill="url(#gt)"/><path d="M105.65 15.76 L107.57 15.76 L107.73 16.90 L105.66 16.90Z" fill="#74e0d0"/><path d="M105.63 14.06 L107.33 14.06 L107.57 15.76 L105.65 15.76Z" fill="url(#gt)"/><path d="M105.62 13.12 L107.20 13.12 L107.33 14.06 L105.63 14.06Z" fill="#74e0d0"/><path d="M105.61 11.72 L107.00 11.72 L107.20 13.12 L105.62 13.12Z" fill="url(#gt)"/><path d="M105.60 10.96 L106.89 10.96 L107.00 11.72 L105.61 11.72Z" fill="#74e0d0"/><path d="M105.59 9.81 L106.73 9.81 L106.89 10.96 L105.60 10.96Z" fill="url(#gt)"/><path d="M105.58 9.18 L106.64 9.18 L106.73 9.81 L105.59 9.81Z" fill="#74e0d0"/><path d="M105.57 8.24 L106.51 8.24 L106.64 9.18 L105.58 9.18Z" fill="url(#gt)"/><path d="M105.57 7.73 L106.44 7.73 L106.51 8.24 L105.57 8.24Z" fill="#74e0d0"/><path d="M105.56 6.96 L106.33 6.96 L106.44 7.73 L105.57 7.73Z" fill="url(#gt)"/><path d="M105.55 6.53 L106.27 6.53 L106.33 6.96 L105.56 6.96Z" fill="#74e0d0"/><path d="M105.55 5.90 L106.18 5.90 L106.27 6.53 L105.55 6.53Z" fill="url(#gt)"/><path d="M105.54 5.56 L106.13 5.56 L106.18 5.90 L105.55 5.90Z" fill="#74e0d0"/><path d="M105.54 5.04 L106.06 5.04 L106.13 5.56 L105.54 5.56Z" fill="url(#gt)"/><path d="M105.54 4.75 L106.02 4.75 L106.06 5.04 L105.54 5.04Z" fill="#74e0d0"/><path d="M105.53 4.33 L105.96 4.33 L106.02 4.75 L105.54 4.75Z" fill="url(#gt)"/><path d="M105.53 4.10 L105.92 4.10 L105.96 4.33 L105.53 4.33Z" fill="#74e0d0"/><path d="M105.53 3.75 L105.87 3.75 L105.92 4.10 L105.53 4.10Z" fill="url(#gt)"/><path d="M105.52 3.56 L105.85 3.56 L105.87 3.75 L105.53 3.75Z" fill="#74e0d0"/><path d="M105.52 3.27 L105.81 3.27 L105.85 3.56 L105.52 3.56Z" fill="url(#gt)"/><path d="M105.52 3.11 L105.78 3.11 L105.81 3.27 L105.52 3.27Z" fill="#74e0d0"/><path d="M105.52 2.88 L105.75 2.88 L105.78 3.11 L105.52 3.11Z" fill="url(#gt)"/><path d="M105.52 2.75 L105.73 2.75 L105.75 2.88 L105.52 2.88Z" fill="#74e0d0"/><path d="M105.51 2.56 L105.71 2.56 L105.73 2.75 L105.52 2.75Z" fill="url(#gt)"/><path d="M105.51 2.45 L105.69 2.45 L105.71 2.56 L105.51 2.56Z" fill="#74e0d0"/><path d="M118.20 78.40 L133.66 78.40 L137.36 88.55 L119.87 88.55Z" fill="url(#gm)"/><path d="M117.28 72.81 L131.62 72.81 L133.66 78.40 L118.20 78.40Z" fill="#c44cc4"/><path d="M115.91 64.49 L128.59 64.49 L131.62 72.81 L117.28 72.81Z" fill="url(#gm)"/><path d="M115.16 59.90 L126.92 59.90 L128.59 64.49 L115.91 64.49Z" fill="#c44cc4"/><path d="M114.04 53.08 L124.43 53.08 L126.92 59.90 L115.16 59.90Z" fill="url(#gm)"/><path d="M113.42 49.32 L123.06 49.32 L124.43 53.08 L114.04 53.08Z" fill="#c44cc4"/><path d="M112.50 43.72 L121.03 43.72 L123.06 49.32 L113.42 49.32Z" fill="url(#gm)"/><path d="M112.00 40.64 L119.90 40.64 L121.03 43.72 L112.50 43.72Z" fill="#c44cc4"/><path d="M111.24 36.05 L118.23 36.05 L119.90 40.64 L112.00 40.64Z" fill="url(#gm)"/><path d="M110.83 33.52 L117.31 33.52 L118.23 36.05 L111.24 36.05Z" fill="#c44cc4"/><path d="M110.21 29.76 L115.94 29.76 L117.31 33.52 L110.83 33.52Z" fill="url(#gm)"/><path d="M109.87 27.68 L115.18 27.68 L115.94 29.76 L110.21 29.76Z" fill="#c44cc4"/><path d="M109.36 24.60 L114.06 24.60 L115.18 27.68 L109.87 27.68Z" fill="url(#gm)"/><path d="M109.08 22.90 L113.44 22.90 L114.06 24.60 L109.36 24.60Z" fill="#c44cc4"/><path d="M108.67 20.37 L112.52 20.37 L113.44 22.90 L109.08 22.90Z" fill="url(#gm)"/><path d="M108.44 18.98 L112.01 18.98 L112.52 20.37 L108.67 20.37Z" fill="#c44cc4"/><path d="M108.10 16.90 L111.26 16.90 L112.01 18.98 L108.44 18.98Z" fill="url(#gm)"/><path d="M107.91 15.76 L110.84 15.76 L111.26 16.90 L108.10 16.90Z" fill="#c44cc4"/><path d="M107.63 14.06 L110.22 14.06 L110.84 15.76 L107.91 15.76Z" fill="url(#gm)"/><path d="M107.47 13.12 L109.88 13.12 L110.22 14.06 L107.63 14.06Z" fill="#c44cc4"/><path d="M107.25 11.72 L109.37 11.72 L109.88 13.12 L107.47 13.12Z" fill="url(#gm)"/><path d="M107.12 10.96 L109.09 10.96 L109.37 11.72 L107.25 11.72Z" fill="#c44cc4"/><path d="M106.93 9.81 L108.67 9.81 L109.09 10.96 L107.12 10.96Z" fill="url(#gm)"/><path d="M106.83 9.18 L108.44 9.18 L108.67 9.81 L106.93 9.81Z" fill="#c44cc4"/><path d="M106.67 8.24 L108.10 8.24 L108.44 9.18 L106.83 9.18Z" fill="url(#gm)"/><path d="M106.59 7.73 L107.91 7.73 L108.10 8.24 L106.67 8.24Z" fill="#c44cc4"/><path d="M106.46 6.96 L107.63 6.96 L107.91 7.73 L106.59 7.73Z" fill="url(#gm)"/><path d="M106.39 6.53 L107.48 6.53 L107.63 6.96 L106.46 6.96Z" fill="#c44cc4"/><path d="M106.29 5.90 L107.25 5.90 L107.48 6.53 L106.39 6.53Z" fill="url(#gm)"/><path d="M106.23 5.56 L107.12 5.56 L107.25 5.90 L106.29 5.90Z" fill="#c44cc4"/><path d="M106.15 5.04 L106.93 5.04 L107.12 5.56 L106.23 5.56Z" fill="url(#gm)"/><path d="M106.10 4.75 L106.83 4.75 L106.93 5.04 L106.15 5.04Z" fill="#c44cc4"/><path d="M106.03 4.33 L106.68 4.33 L106.83 4.75 L106.10 4.75Z" fill="url(#gm)"/><path d="M105.99 4.10 L106.59 4.10 L106.68 4.33 L106.03 4.33Z" fill="#c44cc4"/><path d="M105.94 3.75 L106.46 3.75 L106.59 4.10 L105.99 4.10Z" fill="url(#gm)"/><path d="M105.90 3.56 L106.40 3.56 L106.46 3.75 L105.94 3.75Z" fill="#c44cc4"/><path d="M105.86 3.27 L106.29 3.27 L106.40 3.56 L105.90 3.56Z" fill="url(#gm)"/><path d="M105.83 3.11 L106.23 3.11 L106.29 3.27 L105.86 3.27Z" fill="#c44cc4"/><path d="M105.79 2.88 L106.15 2.88 L106.23 3.11 L105.83 3.11Z" fill="url(#gm)"/><path d="M105.77 2.75 L106.10 2.75 L106.15 2.88 L105.79 2.88Z" fill="#c44cc4"/><path d="M105.74 2.56 L106.03 2.56 L106.10 2.75 L105.77 2.75Z" fill="url(#gm)"/><path d="M105.72 2.45 L105.99 2.45 L106.03 2.56 L105.74 2.56Z" fill="#c44cc4"/><path d="M135.87 78.40 L167.89 78.40 L176.08 88.55 L139.85 88.55Z" fill="url(#gt)"/><path d="M133.67 72.81 L163.38 72.81 L167.89 78.40 L135.87 78.40Z" fill="#74e0d0"/><path d="M130.40 64.49 L156.66 64.49 L163.38 72.81 L133.67 72.81Z" fill="url(#gt)"/><path d="M128.60 59.90 L152.96 59.90 L156.66 64.49 L130.40 64.49Z" fill="#74e0d0"/><path d="M125.92 53.08 L147.45 53.08 L152.96 59.90 L128.60 59.90Z" fill="url(#gt)"/><path d="M124.44 49.32 L144.42 49.32 L147.45 53.08 L125.92 53.08Z" fill="#74e0d0"/><path d="M122.24 43.72 L139.90 43.72 L144.42 49.32 L124.44 49.32Z" fill="url(#gt)"/><path d="M121.03 40.64 L137.41 40.64 L139.90 43.72 L122.24 43.72Z" fill="#74e0d0"/><path d="M119.23 36.05 L133.71 36.05 L137.41 40.64 L121.03 40.64Z" fill="url(#gt)"/><path d="M118.24 33.52 L131.67 33.52 L133.71 36.05 L119.23 36.05Z" fill="#74e0d0"/><path d="M116.76 29.76 L128.63 29.76 L131.67 33.52 L118.24 33.52Z" fill="url(#gt)"/><path d="M115.94 27.68 L126.96 27.68 L128.63 29.76 L116.76 29.76Z" fill="#74e0d0"/><path d="M114.73 24.60 L124.47 24.60 L126.96 27.68 L115.94 27.68Z" fill="url(#gt)"/><path d="M114.06 22.90 L123.10 22.90 L124.47 24.60 L114.73 24.60Z" fill="#74e0d0"/><path d="M113.07 20.37 L121.05 20.37 L123.10 22.90 L114.06 22.90Z" fill="url(#gt)"/><path d="M112.52 18.98 L119.93 18.98 L121.05 20.37 L113.07 20.37Z" fill="#74e0d0"/><path d="M111.71 16.90 L118.25 16.90 L119.93 18.98 L112.52 18.98Z" fill="url(#gt)"/><path d="M111.26 15.76 L117.33 15.76 L118.25 16.90 L111.71 16.90Z" fill="#74e0d0"/><path d="M110.59 14.06 L115.96 14.06 L117.33 15.76 L111.26 15.76Z" fill="url(#gt)"/><path d="M110.22 13.12 L115.20 13.12 L115.96 14.06 L110.59 14.06Z" fill="#74e0d0"/><path d="M109.67 11.72 L114.08 11.72 L115.20 13.12 L110.22 13.12Z" fill="url(#gt)"/><path d="M109.37 10.96 L113.46 10.96 L114.08 11.72 L109.67 11.72Z" fill="#74e0d0"/><path d="M108.92 9.81 L112.53 9.81 L113.46 10.96 L109.37 10.96Z" fill="url(#gt)"/><path d="M108.68 9.18 L112.02 9.18 L112.53 9.81 L108.92 9.81Z" fill="#74e0d0"/><path d="M108.31 8.24 L111.27 8.24 L112.02 9.18 L108.68 9.18Z" fill="url(#gt)"/><path d="M108.10 7.73 L110.85 7.73 L111.27 8.24 L108.31 8.24Z" fill="#74e0d0"/><path d="M107.80 6.96 L110.23 6.96 L110.85 7.73 L108.10 7.73Z" fill="url(#gt)"/><path d="M107.63 6.53 L109.89 6.53 L110.23 6.96 L107.80 6.96Z" fill="#74e0d0"/><path d="M107.39 5.90 L109.38 5.90 L109.89 6.53 L107.63 6.53Z" fill="url(#gt)"/><path d="M107.25 5.56 L109.10 5.56 L109.38 5.90 L107.39 5.90Z" fill="#74e0d0"/><path d="M107.05 5.04 L108.68 5.04 L109.10 5.56 L107.25 5.56Z" fill="url(#gt)"/><path d="M106.94 4.75 L108.45 4.75 L108.68 5.04 L107.05 5.04Z" fill="#74e0d0"/><path d="M106.77 4.33 L108.11 4.33 L108.45 4.75 L106.94 4.75Z" fill="url(#gt)"/><path d="M106.68 4.10 L107.92 4.10 L108.11 4.33 L106.77 4.33Z" fill="#74e0d0"/><path d="M106.54 3.75 L107.64 3.75 L107.92 4.10 L106.68 4.10Z" fill="url(#gt)"/><path d="M106.47 3.56 L107.48 3.56 L107.64 3.75 L106.54 3.75Z" fill="#74e0d0"/><path d="M106.35 3.27 L107.25 3.27 L107.48 3.56 L106.47 3.56Z" fill="url(#gt)"/><path d="M106.29 3.11 L107.13 3.11 L107.25 3.27 L106.35 3.27Z" fill="#74e0d0"/><path d="M106.20 2.88 L106.94 2.88 L107.13 3.11 L106.29 3.11Z" fill="url(#gt)"/><path d="M106.15 2.75 L106.83 2.75 L106.94 2.88 L106.20 2.88Z" fill="#74e0d0"/><path d="M106.07 2.56 L106.68 2.56 L106.83 2.75 L106.15 2.75Z" fill="url(#gt)"/><path d="M106.03 2.45 L106.59 2.45 L106.68 2.56 L106.07 2.56Z" fill="#74e0d0"/><circle cx="112.1" cy="56.6" r="10.4" fill="url(#sp)"/><circle cx="81.5" cy="39.7" r="5.6" fill="url(#sp)"/><circle cx="119" cy="27.8" r="3.1" fill="url(#sp)"/><circle cx="101.1" cy="18.8" r="1.6" fill="url(#sp)"/></svg><svg class="gl" viewBox="0 0 126.5 72" preserveAspectRatio="none"><g fill="#fff" font-family="Liberation Sans,sans-serif" font-weight="700"><text x="4" y="7.1" font-size="2.7" textLength="25.5" lengthAdjust="spacingAndGlyphs">LEAD PREPARED</text><text x="4" y="9.9" font-size="2.7" textLength="8" lengthAdjust="spacingAndGlyphs">SERIES</text><text x="4" y="12" font-size="1.2" font-weight="400" fill="#9a98c8" textLength="13.4" lengthAdjust="spacingAndGlyphs">Executive Programme</text><text x="4" y="35.8" font-size="4.6" textLength="28.2" lengthAdjust="spacingAndGlyphs">PARTICIPANT</text></g></svg><!--/PT--></div>
<svg id="nx" viewBox="0 0 14 16"><path d="M4.2 3 L9.6 8 L4.2 13" fill="none" stroke="#dedede" stroke-width="1.9" stroke-linecap="round" stroke-linejoin="round"/></svg>
<div class="gl" style="width:1140px;height:620px">
<span class="w nm" id="n1" style="left:346.31px;letter-spacing:-0.343px">Admin_Ex</span>
<span class="w nm th" id="n2" style="left:458.96px;letter-spacing:-0.135px">26 ณภัทร์ปุล...</span>
<span class="w nm th" id="n3" style="left:584.3px;letter-spacing:-0.171px">6. พิมพ์ชนก_...</span>
<span class="w nm" id="n4" style="left:709.05px;letter-spacing:-0.294px">12. Pornphan...</span>
</div>
<div id="stage"></div>
<svg id="dots" viewBox="0 0 14 4"><circle cx="2" cy="2" r="1.6" fill="#c4c4c4"/><circle cx="7" cy="2" r="1.6" fill="#c4c4c4"/><circle cx="12" cy="2" r="1.6" fill="#c4c4c4"/></svg>
<div id="home"></div>
<div id="slide">
  <div id="band"></div>
  <svg id="logo" viewBox="0 0 42 42">
    <circle cx="21" cy="21" r="20" fill="#fffdf9" stroke="#c7a654" stroke-width="1"/>
    <circle cx="21" cy="21" r="14.3" fill="#2b4693"/>
    <defs><path id="arcT" d="M5.100 21 A15.900 15.900 0 0 1 36.900 21"/><path id="arcB" d="M2.700 21 A18.300 18.300 0 0 0 39.300 21"/></defs>
    <g fill="#a9832e" font-family="Liberation Sans,Loma,Noto Sans Thai,sans-serif" font-weight="700" font-size="3.5">
      <text><textPath href="#arcT" startOffset="50%" text-anchor="middle" textLength="29" lengthAdjust="spacingAndGlyphs">อตฺตานํ อุปมํ กเร</textPath></text>
      <text><textPath href="#arcB" startOffset="50%" text-anchor="middle" textLength="38" lengthAdjust="spacingAndGlyphs">มหาวิทยาลัยมหิดล</textPath></text>
    </g>
    <path d="M3 21l1.200-1.200 1.200 1.200-1.200 1.200zM36.600 21l1.200-1.200 1.200 1.200-1.200 1.200z" fill="#c7a654"/>
    <path d="M21 7.800C21.300 11 21.900 13.300 22.900 15.300 24 17.500 27.100 20.500 27.100 25.200 27.100 30.200 24.500 34.300 21 34.300 17.500 34.300 14.900 30.200 14.900 25.200 14.900 20.500 18 17.500 19.100 15.300 20.100 13.300 20.700 11 21 7.800Z" fill="#d4ad50" fill-opacity=".38" stroke="#d4ad50" stroke-width=".9"/>
    <path d="M21 8.500l1.300 6.200 1.700 3 1.200 3.600h-8.400l1.200-3.600 1.700-3z" fill="#d4ad50" fill-opacity=".75"/>
    <g fill="none" stroke="#d9b55c" stroke-width="0.9">
      <circle cx="19" cy="29.700" r="1.700"/><circle cx="23" cy="29.700" r="1.700"/>
      <path d="M18.400 25.600a2.600 2.600 0 0 1 5.200 0M16.600 23.200q4.400 1.600 8.800 0"/>
    </g>
    <path d="M19.400 15.200h3.200M18.400 18h5.200" stroke="#2b4693" stroke-width="0.5" fill="none"/>
  </svg>
  <div class="gl">
  <span class="w lg l1" id="w10" style="left:72.7px;letter-spacing:0.545px">Mahidol University</span>
  <span class="w lg l2" id="w11" style="left:73.7px;letter-spacing:0.047px">Faculty of Information</span>
  <span class="w lg l3" id="w12" style="left:74.13px;letter-spacing:0.061px">and Communication Technology</span>
  <span class="w t1" id="w1" style="left:31.06px;letter-spacing:-0.796px">Secure</span>
  <span class="w t1" id="w2" style="left:148.6px;letter-spacing:1.384px">Digital</span>
  <span class="w t1" id="w3" style="left:265.68px;letter-spacing:0.514px">Infrastructure</span>
  <span class="w t1" id="w4" style="left:493.13px;letter-spacing:1.823px">and</span>
  <span class="w t2" id="w5" style="left:31.39px;letter-spacing:-0.237px">Data</span>
  <span class="w t2" id="w6" style="left:117.91px;letter-spacing:-0.224px">Governance</span>
  <span class="w sb" id="w7" style="left:31.94px;letter-spacing:1.032px">Ittipon</span>
  <span class="w sb" id="w8" style="left:89.9px;letter-spacing:0.714px">(Art)</span>
  <span class="w sb" id="w9" style="left:130.29px;letter-spacing:-0.134px">Rassameeroj</span>
  </div>
  <div id="shade"></div>
</div>
<div id="tab"><svg viewBox="0 0 15 59" width="15" height="59"><path d="M9.6 23 L6 29.5 L9.6 36" fill="none" stroke="#fff" stroke-width="2" stroke-linecap="round" stroke-linejoin="round"/></svg></div>
</body>
</html>
